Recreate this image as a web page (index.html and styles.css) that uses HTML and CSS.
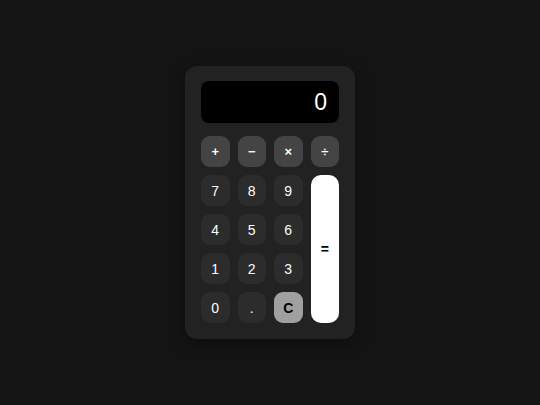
FILE: index.html
```html
<!DOCTYPE html>
<html>
<head>
<meta charset="utf-8">
<link rel="stylesheet" href="styles.css">
</head>
<body>
<div class="calc">
  <div class="display">0</div>
  <div class="keys">
    <button class="key op">+</button>
    <button class="key op">−</button>
    <button class="key op">×</button>
    <button class="key op">÷</button>
    <button class="key">7</button>
    <button class="key">8</button>
    <button class="key">9</button>
    <button class="key equals">=</button>
    <button class="key">4</button>
    <button class="key">5</button>
    <button class="key">6</button>
    <button class="key">1</button>
    <button class="key">2</button>
    <button class="key">3</button>
    <button class="key">0</button>
    <button class="key">.</button>
    <button class="key clear">C</button>
  </div>
</div>
</body>
</html>
```
FILE: styles.css
```css
html, body {
  margin: 0;
  height: 100%;
}
body {
  background: #141414;
  display: flex;
  align-items: center;
  justify-content: center;
  font-family: "Liberation Sans", Arial, sans-serif;
}
.calc {
  width: 138px;
  padding: 15px 16px 16px;
  background: #222222;
  border-radius: 12px;
  box-shadow: 0 4px 14px rgba(0,0,0,0.35);
}
.display {
  height: 42px;
  background: #000000;
  border-radius: 8px;
  color: #ffffff;
  font-size: 23px;
  line-height: 42px;
  text-align: right;
  padding-right: 12px;
  margin-bottom: 13px;
  box-sizing: border-box;
}
.keys {
  display: grid;
  grid-template-columns: repeat(4, 1fr);
  grid-auto-rows: 31px;
  gap: 8px;
}
.key {
  border: none;
  margin: 0;
  padding: 0;
  border-radius: 9px;
  background: #2c2c2c;
  color: #ffffff;
  font-family: "Liberation Sans", Arial, sans-serif;
  font-size: 14px;
}
.key.op {
  background: #444444;
  font-size: 13px;
  font-weight: bold;
}
.key.equals {
  grid-column: 4;
  grid-row: 2 / span 4;
  background: #ffffff;
  color: #000000;
  font-weight: bold;
  border-radius: 10px;
}
.key.clear {
  background: #a0a0a0;
  color: #000000;
  font-weight: bold;
}
```
